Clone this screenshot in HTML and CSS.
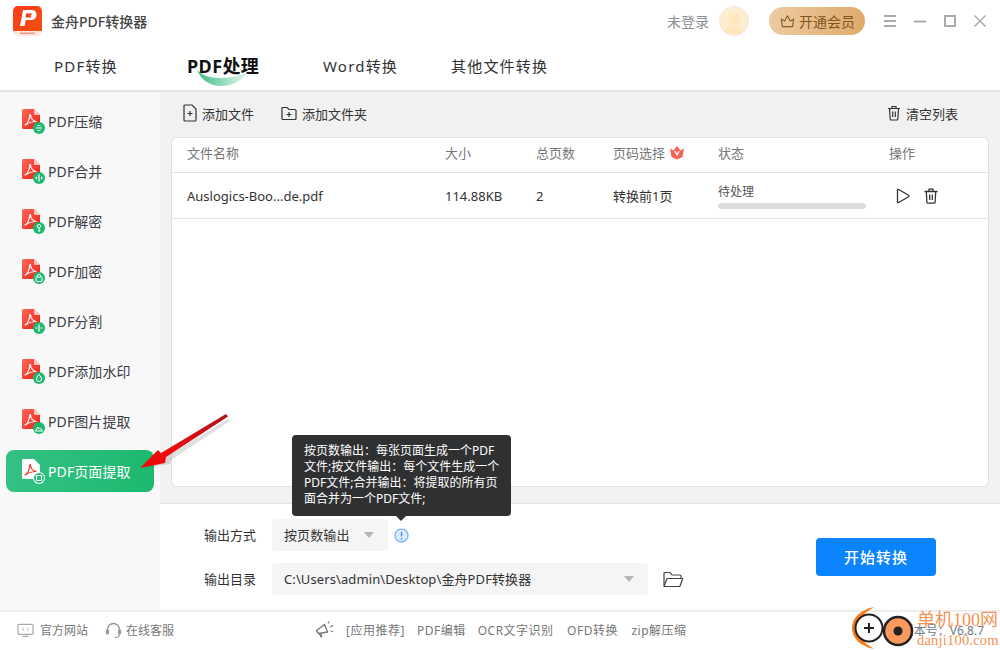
FILE: index.html
```html
<!DOCTYPE html>
<html lang="zh">
<head>
<meta charset="utf-8">
<title>金舟PDF转换器</title>
<link rel="stylesheet" href="styles.css">
</head>
<body>
<svg class="defs" width="0" height="0">
  <defs>
    <linearGradient id="redg" x1="0" y1="0" x2="1" y2="1"><stop offset="0" stop-color="#ff6a5a"/><stop offset="1" stop-color="#e81f14"/></linearGradient>
    <linearGradient id="logog" x1="0" y1="0" x2="1" y2="1"><stop offset="0" stop-color="#ff3a1c"/><stop offset="1" stop-color="#f2500f"/></linearGradient>
    <linearGradient id="swoosh" x1="0" y1="0" x2="1" y2="0"><stop offset="0" stop-color="#3dbd83"/><stop offset="1" stop-color="#3dbd83" stop-opacity=".1"/></linearGradient>
    <linearGradient id="arrowg" x1="1" y1="0" x2="0" y2="1"><stop offset="0" stop-color="#a81418"/><stop offset=".55" stop-color="#e30f12"/><stop offset="1" stop-color="#f80606"/></linearGradient>
    <symbol id="doc" viewBox="0 0 18 20">
      <path d="M1.500 0h10.500l6 6v12.500a1.500 1.500 0 0 1-1.500 1.500H1.500A1.500 1.500 0 0 1 0 18.500V1.500A1.500 1.500 0 0 1 1.500 0z" fill="url(#redg)"/>
      <path d="M12 0v4.500a1.500 1.500 0 0 0 1.500 1.500H18z" fill="#ffc4bc"/>
      <path d="M3 16c2-1 4-4.500 4.800-9-.3-1.800.6-2 .8-.5.3 3 2 5 5.400 6-3.500-.2-7 .8-11 3.500z" fill="none" stroke="#fff" stroke-width="1.200" stroke-linejoin="round"/>
    </symbol>
    <symbol id="docw" viewBox="0 0 18 20">
      <path d="M1.500 0h10.500l6 6v12.500a1.500 1.500 0 0 1-1.500 1.500H1.500A1.500 1.500 0 0 1 0 18.500V1.500A1.500 1.500 0 0 1 1.500 0z" fill="#fff"/>
      <path d="M3 16c2-1 4-4.500 4.800-9-.3-1.800.6-2 .8-.5.3 3 2 5 5.400 6-3.500-.2-7 .8-11 3.500z" fill="none" stroke="#e8352a" stroke-width="1.200" stroke-linejoin="round"/>
    </symbol>
  </defs>
</svg>

<div class="app">
  <header class="head">
    <div class="titlebar">
      <svg class="logo" viewBox="0 0 29 30">
        <rect width="29" height="30" rx="5" fill="#fde6e0"/>
        <path d="M0 5a5 5 0 0 1 5-5h19a5 5 0 0 1 5 5v20H0z" fill="url(#logog)"/>
        <path d="M10 4h8.500c3.500 0 5 2.200 5 4.700 0 3-2.200 5.300-5.500 5.300h-5.200l-1.300 6H7z" fill="#fff"/>
        <path d="M13 7.500h6.500l-2 2.200 1 1.800H12.500z" fill="#f2401a"/>
        <rect x="7" y="26.500" width="15" height="1.500" fill="#f39a88"/>
      </svg>
      <span class="apptitle">金舟PDF转换器</span>
      <span class="login">未登录</span>
      <svg class="avatar" viewBox="0 0 30 30">
        <circle cx="15" cy="15" r="14.600" fill="#fdeed2" stroke="#fbdce0" stroke-width=".8"/>
        <circle cx="15" cy="12.500" r="6" fill="#fee7bd"/>
        <path d="M5.500 25c2-5 6-6.500 9.500-6.500s7.500 1.500 9.500 6.500a14 14 0 0 1-19 0z" fill="#fee7bd"/>
      </svg>
      <div class="vip">
        <svg class="crown" viewBox="0 0 16 14"><path d="M1.500 5l3.500 2L8 1.500 11 7l3.500-2-1 8h-11z" fill="none" stroke="#8a5a24" stroke-width="1.200" stroke-linejoin="round"/></svg>
        <span>开通会员</span>
      </div>
      <div class="winbtns">
        <svg viewBox="0 0 12 12"><path d="M0 1h12M0 6h12M0 11h12" stroke="#aaa" stroke-width="2"/></svg>
        <svg viewBox="0 0 12 12"><path d="M0 6.500h12" stroke="#aaa" stroke-width="2"/></svg>
        <svg viewBox="0 0 12 12"><rect x="1" y="1" width="10" height="10" fill="none" stroke="#aaa" stroke-width="2"/></svg>
        <svg viewBox="0 0 12 12"><path d="M.5.500l11 11M11.500.500l-11 11" stroke="#aaa" stroke-width="1.500"/></svg>
      </div>
    </div>
    <nav class="tabs">
      <span class="tab">PDF转换</span>
      <span class="tab active">
        <svg class="swash" viewBox="0 0 52 16"><path d="M0 0c6 6 14 8 24 8 12 0 21-3 28-7-6 9-16 15-28 15C13 16 4 10 0 0z" fill="url(#swoosh)"/></svg>
        <span class="tablabel">PDF处理</span>
      </span>
      <span class="tab">Word转换</span>
      <span class="tab">其他文件转换</span>
    </nav>
  </header>

  <div class="body">
    <aside class="side">
      <div class="item"><span class="ic"><svg class="doc"><use href="#doc"/></svg><svg class="badge" viewBox="0 0 12 12"><circle cx="6" cy="6" r="6" fill="#1fb871"/><path d="M3 6h6M4.500 3.500h3M4.500 8.500h3" stroke="#fff" stroke-width="1"/></svg></span>PDF压缩</div>
      <div class="item"><span class="ic"><svg class="doc"><use href="#doc"/></svg><svg class="badge" viewBox="0 0 12 12"><circle cx="6" cy="6" r="6" fill="#1fb871"/><path d="M2 6l2-1.700v3.400zM10 6L8 4.300v3.400z" fill="#fff"/><path d="M6 2.500v7" stroke="#fff" stroke-width="1.200"/></svg></span>PDF合并</div>
      <div class="item"><span class="ic"><svg class="doc"><use href="#doc"/></svg><svg class="badge" viewBox="0 0 12 12"><circle cx="6" cy="6" r="6" fill="#1fb871"/><circle cx="6" cy="4.200" r="1.700" fill="none" stroke="#fff"/><path d="M6 6v4M6 8.500h1.500" stroke="#fff"/></svg></span>PDF解密</div>
      <div class="item"><span class="ic"><svg class="doc"><use href="#doc"/></svg><svg class="badge" viewBox="0 0 12 12"><circle cx="6" cy="6" r="6" fill="#1fb871"/><rect x="3" y="5" width="6" height="4.500" rx=".6" fill="none" stroke="#fff"/><path d="M4.300 5V4a1.700 1.700 0 0 1 3.400 0v1" fill="none" stroke="#fff" stroke-width=".9"/></svg></span>PDF加密</div>
      <div class="item"><span class="ic"><svg class="doc"><use href="#doc"/></svg><svg class="badge" viewBox="0 0 12 12"><circle cx="6" cy="6" r="6" fill="#1fb871"/><path d="M6 2.500v7M2.500 6h2M7.500 6h2" stroke="#fff" stroke-width="1.200"/></svg></span>PDF分割</div>
      <div class="item"><span class="ic"><svg class="doc"><use href="#doc"/></svg><svg class="badge" viewBox="0 0 12 12"><circle cx="6" cy="6" r="6" fill="#1fb871"/><path d="M6 2.500C7.500 4.500 8.500 5.700 8.500 7a2.500 2.500 0 0 1-5 0c0-1.300 1-2.500 2.500-4.500z" fill="none" stroke="#fff"/></svg></span>PDF添加水印</div>
      <div class="item"><span class="ic"><svg class="doc"><use href="#doc"/></svg><svg class="badge" viewBox="0 0 12 12"><circle cx="6" cy="6" r="6" fill="#1fb871"/><path d="M2.500 9l2.300-4 1.500 2 1-1L9.500 9z" fill="none" stroke="#fff" stroke-linejoin="round"/></svg></span>PDF图片提取</div>
      <div class="item on"><span class="ic"><svg class="doc"><use href="#docw"/></svg><svg class="badge" viewBox="0 0 12 12"><circle cx="6" cy="6" r="6" fill="#fff"/><circle cx="6" cy="6" r="5" fill="#2abd7c"/><rect x="3.500" y="3.500" width="5" height="5" fill="none" stroke="#fff"/></svg></span>PDF页面提取</div>
    </aside>

    <main class="main">
      <div class="toolbar">
        <span class="tool">
          <svg class="ti" viewBox="0 0 14 18"><path d="M2 1h7l4 4v11a1 1 0 0 1-1 1H2a1 1 0 0 1-1-1V2a1 1 0 0 1 1-1z" fill="none" stroke="#333" stroke-width="1.200"/><path d="M7 7v5M4.500 9.500h5" stroke="#333" stroke-width="1.200"/></svg>
          添加文件
        </span>
        <span class="tool second">
          <svg class="tf" viewBox="0 0 16 15"><path d="M1 2.500A1 1 0 0 1 2 1.500h4l2 2h6a1 1 0 0 1 1 1v8a1 1 0 0 1-1 1H2a1 1 0 0 1-1-1z" fill="none" stroke="#333" stroke-width="1.200"/><path d="M8 6v5M5.500 8.500h5" stroke="#333" stroke-width="1.200"/></svg>
          添加文件夹
        </span>
        <span class="tool clear">
          <svg class="tt" viewBox="0 0 14 16"><path d="M1 3.500h12M5 3.500V1.500h4v2M2.500 3.500l.7 10.500a1 1 0 0 0 1 1h5.600a1 1 0 0 0 1-1l.7-10.500M5.700 6.500v5.500M8.300 6.500v5.500" fill="none" stroke="#333" stroke-width="1.200"/></svg>
          清空列表
        </span>
      </div>

      <section class="card">
        <div class="row th">
          <span>文件名称</span><span>大小</span><span>总页数</span>
          <span class="psel">页码选择
            <svg class="pcrown" viewBox="0 0 16 14"><path d="M1 3l3.500 2L8 .5 11.500 5 15 3l-1.500 8.500L8 14l-5.500-2.500z" fill="#f9604f"/><path d="M5.800 5.500L8 9.500l2.200-4" fill="none" stroke="#fff" stroke-width="1.400"/></svg>
          </span>
          <span>状态</span><span>操作</span>
        </div>
        <div class="row td">
          <span>Auslogics-Boo...de.pdf</span><span>114.88KB</span><span>2</span><span>转换前1页</span>
          <span class="status"><span class="stxt">待处理</span><span class="bar"></span></span>
          <span class="ops">
            <svg class="oi" viewBox="0 0 14 16"><path d="M1.500 2.200a.8.800 0 0 1 1.200-.7l9.800 5.800a.8.800 0 0 1 0 1.400L2.700 14.500a.8.800 0 0 1-1.200-.7z" fill="none" stroke="#333" stroke-width="1.300" stroke-linejoin="round"/></svg>
            <svg class="oi" viewBox="0 0 14 16"><path d="M.5 3.500h13M5 3.500V1.200h4v2.300M2.300 3.500l.6 10.500a1.200 1.200 0 0 0 1.200 1.200h5.800a1.200 1.200 0 0 0 1.200-1.200l.6-10.500M5.700 6.500v5.500M8.300 6.500v5.500" fill="none" stroke="#333" stroke-width="1.300"/></svg>
          </span>
        </div>
      </section>

      <section class="output">
        <div class="fields">
          <div class="field">
            <label>输出方式</label>
            <div class="select short"><span>按页数输出</span><i class="caret"></i></div>
            <svg class="info" viewBox="0 0 16 16"><circle cx="8" cy="8" r="7" fill="#d9e9ff" stroke="#6aa9f5" stroke-width="1.200"/><path d="M8 4v5" stroke="#4a90ee" stroke-width="1.500"/><circle cx="8" cy="11.500" r=".9" fill="#4a90ee"/></svg>
          </div>
          <div class="field">
            <label>输出目录</label>
            <div class="select long"><span>C:\Users\admin\Desktop\金舟PDF转换器</span><i class="caret"></i></div>
            <svg class="open" viewBox="0 0 21 17"><path d="M1 14.500V2.500a1 1 0 0 1 1-1h5l2 2.500h8a1 1 0 0 1 1 1v2" fill="none" stroke="#444" stroke-width="1.200"/><path d="M1 15.500l3-8h15.800l-3 8z" fill="none" stroke="#444" stroke-width="1.200" stroke-linejoin="round"/></svg>
          </div>
        </div>
        <button class="start">开始转换</button>
      </section>
    </main>
  </div>

  <footer class="foot">
    <span class="flink">
      <svg class="fm" viewBox="0 0 18 15"><rect x="1" y="1" width="16" height="10.500" rx="1" fill="none" stroke="#aaa" stroke-width="1.300"/><path d="M6 13.700h6" stroke="#aaa" stroke-width="1.500"/><path d="M7.500 4.500L6 6.200l1.500 1.700M10.500 4.500L12 6.200l-1.500 1.700" fill="none" stroke="#aaa"/></svg>
      官方网站
    </span>
    <span class="flink kf">
      <svg class="fh" viewBox="0 0 17 17"><path d="M2.500 9V7.500a6 6 0 0 1 12 0V9" fill="none" stroke="#999" stroke-width="1.400"/><rect x="1" y="7.500" width="3" height="5" rx="1.200" fill="#999"/><rect x="13" y="7.500" width="3" height="5" rx="1.200" fill="#999"/><path d="M14.500 12c0 2.500-2 3.500-5 3.500" fill="none" stroke="#999" stroke-width="1.200"/></svg>
      在线客服
    </span>
    <svg class="horn" viewBox="0 0 19 18"><path d="M1.500 9.500l8-6 3 7.500-9 1.500z" fill="none" stroke="#777" stroke-width="1.400" stroke-linejoin="round"/><path d="M4 13l1.500 3.500 2-.5-1-3.500" fill="#777"/><path d="M13 2.500L14 .5M15 6l3-1.500M15.500 10l2.500.5" stroke="#777" stroke-width="1.200"/></svg>
    <span class="fl fa">[应用推荐]</span>
    <span class="fl">PDF编辑</span>
    <span class="fl">OCR文字识别</span>
    <span class="fl wide">OFD转换</span>
    <span class="fl wide">zip解压缩</span>
    <span class="ver">版本号：V6.8.7</span>
  </footer>

  <div class="tip">按页数输出：每张页面生成一个PDF<br>文件;按文件输出：每个文件生成一个<br>PDF文件;合并输出：将提取的所有页<br>面合并为一个PDF文件;</div>

  <svg class="arrow" viewBox="0 0 90 56">
    <path d="M4 54L23 42 29 41 88 5 90 7 31 46 30 50z" fill="#666" opacity=".2"/>
    <path d="M0 54L18 36 21 39 86 0 88 2.500 26 43 25 49z" fill="url(#arrowg)"/>
  </svg>

  <div class="mark">
    <svg class="marklogo" viewBox="0 0 66 44">
      <path d="M23 1C9 4 1 12 1 22s8 18 22 21c-8-5-17-11-17-21S15 6 23 1z" fill="#f97a16"/>
      <circle cx="18" cy="22" r="13.500" fill="#fff" stroke="#222" stroke-width="2"/>
      <path d="M18 17v10M13 22h10" stroke="#222" stroke-width="2"/>
      <circle cx="47" cy="25" r="14" fill="#f99a5c" stroke="#222" stroke-width="2.500"/>
      <circle cx="47" cy="25" r="4.500" fill="#222"/>
    </svg>
    <div class="marktext"><span class="m1">单机100网</span><span class="m2">danji100.com</span></div>
  </div>
</div>
</body>
</html>
```
FILE: styles.css
```css
* { box-sizing: border-box; }
html, body { margin: 0; padding: 0; }
body { font-family: "Noto Sans", "Noto Sans CJK SC", sans-serif; font-size: 13px; color: #333; background: #fff; }
.defs { display: block; height: 0; }
.app { position: relative; width: 1000px; height: 650px; overflow: hidden; display: flex; flex-direction: column; }

.head { height: 92px; border-bottom: 2px solid #e3e3e3; flex: none; }
.titlebar { height: 42px; display: flex; align-items: center; padding-left: 13px; }
.logo { width: 29px; height: 30px; }
.apptitle { margin-left: 9px; font-size: 14px; font-weight: 500; color: #444; width: 616px; }
.login { width: 52px; color: #8a8f96; font-size: 14px; }
.avatar { width: 30px; height: 30px; }
.vip { margin-left: 20px; width: 96px; height: 28px; border-radius: 14px; background: linear-gradient(90deg, #eccba0, #dfab6b); display: flex; align-items: center; padding-left: 11px; color: #80551f; font-size: 14px; }
.crown { width: 15px; height: 14px; margin-right: 4px; }
.winbtns { display: flex; gap: 18px; margin-left: 19px; }
.winbtns svg { width: 12px; height: 12px; }

.tabs { display: grid; grid-template-columns: 133px 136px 128px auto; padding: 0 0 2px 54px; height: 48px; align-items: center; }
.tab { position: relative; font-size: 15px; letter-spacing: 1.2px; color: #333; }
.tab.active { font-size: 18px; font-weight: 700; color: #111; letter-spacing: .4px; }
.tablabel { position: relative; }
.swash { position: absolute; left: 10px; top: 18px; width: 52px; height: 16px; }

.body { flex: 1; display: flex; min-height: 0; }
.side { width: 160px; background: #f8f8f8; padding: 8px 6px 0; display: flex; flex-direction: column; gap: 8px; flex: none; }
.item { height: 42px; display: flex; align-items: center; padding-left: 16px; color: #3c3c44; font-size: 14px; letter-spacing: .1px; border-radius: 8px; position: relative; }
.ic { position: relative; width: 26px; height: 25px; flex: none; margin-top: 1px; }
.doc { position: absolute; left: 0; top: 0; width: 18px; height: 20px; }
.badge { position: absolute; left: 11px; top: 13px; width: 12px; height: 12px; }
.item.on { background: linear-gradient(90deg, #34c184, #1cb96f); color: #fff; }

.main { flex: 1; background: #f1f1f1; display: flex; flex-direction: column; min-width: 0; }
.toolbar { height: 44px; display: flex; align-items: center; padding: 0 0 2px 23px; flex: none; color: #333; }
.tool { display: inline-flex; align-items: center; gap: 5px; }
.second { margin-left: 27px; }
.clear { margin-left: auto; margin-right: 42px; }
.ti { width: 14px; height: 18px; }
.tf { width: 16px; height: 15px; }
.tt { width: 14px; height: 16px; }

.card { margin: 1px 11px 0; height: 350px; background: #fff; border: 1px solid #e2e2e2; border-radius: 6px; flex: none; }
.row { display: grid; grid-template-columns: 258px 91px 77px 105px 171px 1fr; padding-left: 15px; align-items: center; border-bottom: 1px solid #e2e2e2; }
.th { height: 35px; color: #777; padding-bottom: 5px; }
.td { height: 46px; color: #333; }
.psel { display: inline-flex; align-items: center; gap: 4px; }
.pcrown { width: 16px; height: 15px; }
.status { display: flex; flex-direction: column; gap: 3px; }
.stxt { font-size: 12px; line-height: 17px; color: #555; }
.bar { width: 148px; height: 6px; border-radius: 3px; background: #dcdcdc; }
.ops { display: flex; gap: 14px; padding-left: 7px; }
.oi { width: 14px; height: 16px; }

.output { margin-top: 16px; flex: 1; background: #fff; border-top: 1px solid #e2e2e2; display: flex; align-items: flex-start; }
.fields { width: 656px; padding-top: 15px; display: flex; flex-direction: column; gap: 12px; }
.field { display: flex; align-items: center; height: 32px; padding-left: 44px; }
.field label { width: 68px; color: #333; padding-bottom: 2px; }
.select { height: 32px; border-radius: 4px; background: #f5f5f5; display: flex; align-items: center; justify-content: space-between; padding: 0 14px 2px 12px; color: #333; font-size: 13px; letter-spacing: .1px; }
.short { width: 116px; }
.long { width: 376px; }
.caret { width: 0; height: 0; border-left: 5px solid transparent; border-right: 5px solid transparent; border-top: 6px solid #b5b5b5; margin-top: 2px; }
.info { width: 15px; height: 15px; margin-left: 6px; }
.open { width: 21px; height: 17px; margin-left: 15px; }
.start { margin: 34px 0 0; width: 120px; height: 38px; border: 0; border-radius: 4px; background: #0b84ff; color: #fff; font: 500 15px "Noto Sans", "Noto Sans CJK SC", sans-serif; letter-spacing: 1px; padding-bottom: 2px; }

.foot { height: 40px; flex: none; border-top: 2px solid #eee; display: flex; align-items: center; padding: 0 0 2px 17px; font-size: 12px; color: #777; background: #fff; }
.flink { display: inline-flex; align-items: center; gap: 6px; }
.kf { margin-left: 17px; gap: 4px; }
.fm { width: 17px; height: 15px; }
.fh { width: 17px; height: 17px; }
.horn { width: 19px; height: 18px; margin-left: 141px; }
.fl { margin-left: 12px; letter-spacing: .5px; }
.fl.wide { margin-left: 13.500px; }
.ver { margin-left: auto; margin-right: 16px; color: #6d7a88; }

.tip { position: absolute; left: 292px; top: 435px; width: 219px; height: 81px; background: #2f3032; color: #fff; font-size: 12px; line-height: 16px; padding: 8px 0 0 12px; border-radius: 4px; white-space: nowrap; }
.tip::after { content: ""; position: absolute; left: 104px; top: 81px; border-left: 5px solid transparent; border-right: 5px solid transparent; border-top: 5px solid #2f3032; }

.arrow { position: absolute; left: 140px; top: 414px; width: 90px; height: 56px; }

.mark { position: absolute; left: 851px; top: 606px; display: flex; align-items: flex-start; }
.marklogo { width: 66px; height: 44px; }
.marktext { display: flex; flex-direction: column; font-family: "Liberation Serif", "Noto Sans CJK SC", serif; color: #f47f33; opacity: .85; margin-top: 3px; }
.m1 { font-size: 18px; line-height: 22px; white-space: nowrap; }
.m2 { font-size: 14.500px; line-height: 18px; letter-spacing: .2px; white-space: nowrap; }
```
